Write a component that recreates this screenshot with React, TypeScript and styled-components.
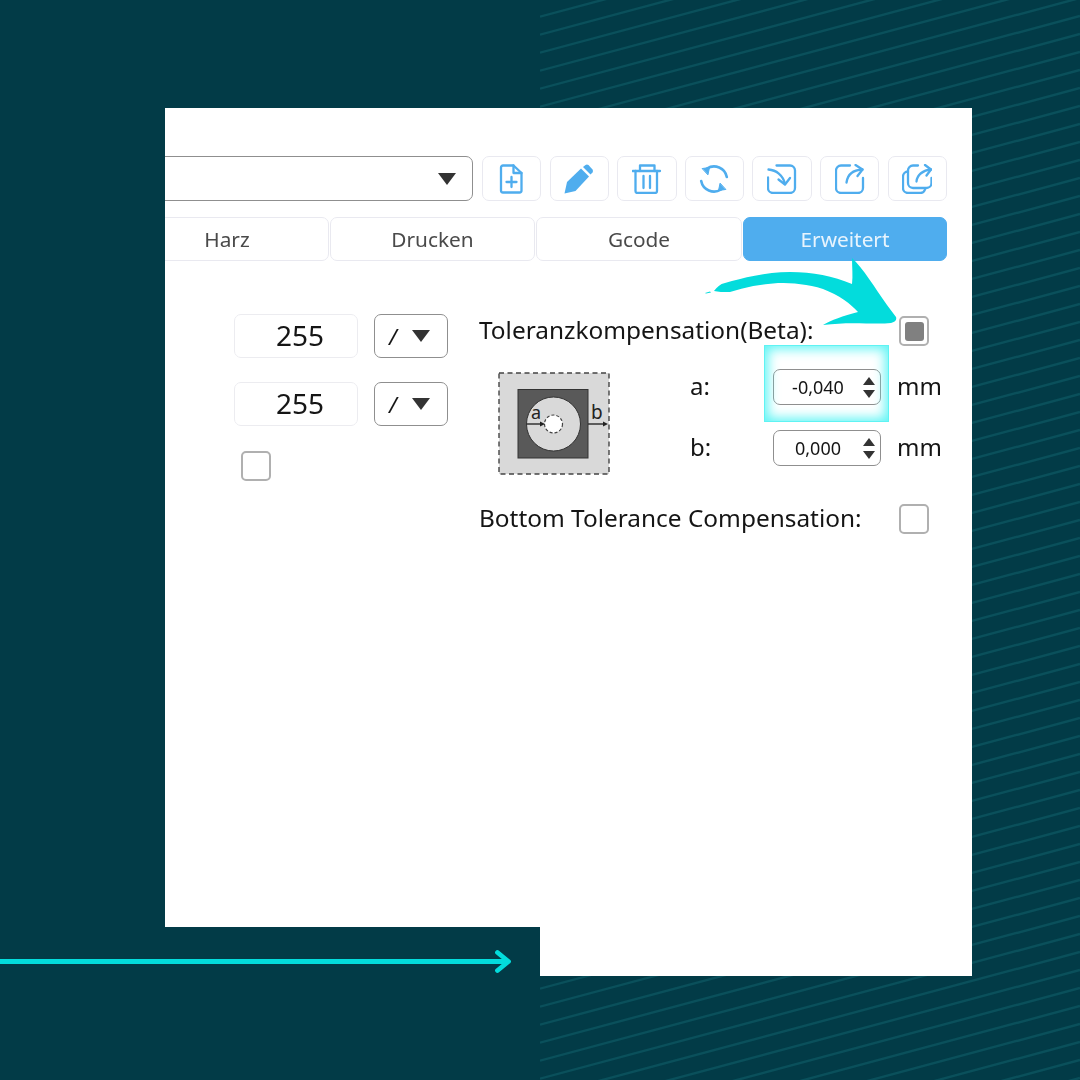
import { ReactNode } from 'react'
import styled, { createGlobalStyle, css } from 'styled-components'

const TEAL = '#03dcdc'
const BLUE = '#4fadee'
const DARK = '#023b47'
const FONT = '"Noto Sans", "Open Sans", sans-serif'

// diagonal lines of the backdrop, 18px apart, rising 15deg to the right
const stripeLines = Array.from({ length: 70 }, (_, k) => {
  const y = 16.7 + 18 * k
  return `<path d="M0 ${y}L540 ${(y - 144.7).toFixed(1)}"/>`
}).join('')
const stripes = encodeURIComponent(
  `<svg xmlns="http://www.w3.org/2000/svg" width="540" height="1080" fill="none" stroke="#0a505b" stroke-width="2.4">${stripeLines}</svg>`
)

const GlobalStyle = createGlobalStyle`
  html, body {
    margin: 0;
    padding: 0;
    background: ${DARK};
  }

  * {
    box-sizing: border-box;
  }
`

// the source is an upscaled screenshot, its contents are a bit soft
const soft = css`
  filter: blur(0.4px);
`

const Page = styled.div`
  width: 1080px;
  height: 1080px;
  padding-top: 108px;
  overflow: hidden;
  font-family: ${FONT};
  color: #151515;
  background: url("data:image/svg+xml,${stripes}") right top / 540px 1080px no-repeat ${DARK};
`

const Sheet = styled.main`
  position: relative;
  width: 807px;
  height: 819px;
  margin-left: 165px;
  padding-top: 48px;
  overflow: hidden;
  background: #fff;
`

const Footer = styled.div`
  display: flex;
  width: 972px;
  height: 49px;
`

const FooterArrow = styled.svg`
  flex: 0 0 540px;
  height: 49px;
`

const FooterFill = styled.div`
  flex: 1;
  background: #fff;
`

const Toolbar = styled.div`
  ${soft};
  display: flex;
  height: 45px;
  margin-left: -40px;
  padding-right: 25px;
`

const Caret = styled.span<{ $size?: number }>`
  display: block;
  flex: none;
  border-left: ${p => (p.$size ?? 9.5)}px solid transparent;
  border-right: ${p => (p.$size ?? 9.5)}px solid transparent;
  border-top: ${p => ((p.$size ?? 9.5) * 1.35).toFixed(1)}px solid #333;
`

const ProfileSelect = styled.div`
  display: flex;
  flex: 1;
  align-items: center;
  justify-content: flex-end;
  margin-right: 9px;
  padding-right: 16px;
  border: 1.5px solid #8f8f8f;
  border-radius: 7px;
`

const ToolButtons = styled.div`
  display: flex;
  gap: 8.1px;
`

const ToolButton = styled.div`
  display: flex;
  align-items: center;
  justify-content: center;
  width: 59.5px;
  height: 45px;
  border: 1.5px solid #e9e9f0;
  border-radius: 7px;

  svg {
    width: 30px;
    height: 30px;
    fill: none;
    stroke: ${BLUE};
    stroke-width: 2.3;
    stroke-linecap: round;
    stroke-linejoin: round;
  }
`

const Tabs = styled.div`
  ${soft};
  display: grid;
  grid-template-columns: 204px 205px 206px 204px;
  gap: 1px;
  height: 44px;
  margin: 16px 0 0 -40px;
`

const Tab = styled.div<{ $active?: boolean }>`
  display: flex;
  align-items: center;
  justify-content: center;
  border: 1.5px solid #e9e9f0;
  border-radius: 7px;
  font-size: 20.8px;
  color: #4a4a4a;

  ${p =>
    p.$active &&
    css`
      border-color: ${BLUE};
      background: ${BLUE};
      color: #e8f4fd;
    `}
`

const Body = styled.div`
  ${soft};
  display: grid;
  grid-template-columns: 314px 493px;
  margin-top: 53px;
`

const LeftColumn = styled.div`
  display: flex;
  flex-direction: column;
  gap: 24px;
  padding-left: 69px;
`

const FieldRow = styled.div`
  display: flex;
  gap: 16px;
  height: 44px;
`

const ValueField = styled.div`
  display: flex;
  align-items: center;
  justify-content: center;
  width: 124px;
  padding: 0 0 2px 8px;
  border: 1.5px solid #ececf0;
  border-radius: 7px;
  font-size: 28px;
  line-height: 1;
`

const UnitSelect = styled.div`
  display: flex;
  align-items: center;
  justify-content: space-between;
  width: 74px;
  padding: 0 17px 0 14px;
  border: 1.5px solid #8f8f8f;
  border-radius: 7px;
  font-size: 22px;
`

const CheckBox = styled.div<{ $checked?: boolean }>`
  display: flex;
  align-items: center;
  justify-content: center;
  flex: none;
  width: 30px;
  height: 30px;
  border: 2.5px solid #b0b0b0;
  border-radius: 5px;
  background: #fff;

  &::before {
    content: '';
    display: ${p => (p.$checked ? 'block' : 'none')};
    width: 19px;
    height: 19px;
    border-radius: 3px;
    background: #808080;
  }
`

const LeftCheck = styled(CheckBox)`
  margin: 1px 0 0 7px;
`

const RightColumn = styled.div`
  display: flex;
  flex-direction: column;
  min-width: 0;
  padding-right: 43px;
`

const OptionRow = styled.div`
  display: flex;
  align-items: center;
  justify-content: space-between;
  height: 30px;
  margin-top: 2px;
  font-size: 24.4px;
  white-space: nowrap;
`

const RaisedText = styled.span`
  margin-top: -3px;
`

const Compensation = styled.div`
  display: flex;
  align-items: flex-start;
  height: 106px;
  margin: 23px 0 27px;
`

const Diagram = styled.svg`
  flex: none;
  width: 112px;
  height: 104px;
  margin: 3px 80px 0 19px;
`

const SpinRows = styled.div`
  display: flex;
  flex: none;
  flex-direction: column;
  gap: 25px;
`

const SpinRow = styled.div`
  display: flex;
  align-items: center;
  height: 36px;
  font-size: 24px;
`

const SpinLabel = styled(RaisedText)`
  width: 83px;
`

const SpinBox = styled.div<{ $highlight?: boolean }>`
  position: relative;
  display: flex;
  align-items: center;
  width: 108px;
  height: 36px;
  margin-right: 16px;
  padding: 0 5px 0 0;
  border: 1.5px solid #8f8f8f;
  border-radius: 7px;
  font-size: 18px;

  ${p =>
    p.$highlight &&
    css`
      &::after {
        content: '';
        position: absolute;
        inset: -25px -9px -18px -10px;
        border: 1px solid #5ff3f3;
        box-shadow: inset 0 0 12px 3px #5ff5f5;
        pointer-events: none;
      }
    `}
`

const SpinValue = styled.span`
  flex: 1;
  padding-right: 1px;
  text-align: center;
`

const SpinArrows = styled.span`
  display: flex;
  flex-direction: column;
  gap: 5px;
`

const SpinUp = styled.span`
  display: block;
  border-left: 6.5px solid transparent;
  border-right: 6.5px solid transparent;
  border-bottom: 8px solid #333;
`

const SpinDown = styled.span`
  display: block;
  border-left: 6.5px solid transparent;
  border-right: 6.5px solid transparent;
  border-top: 8px solid #333;
`

const BrushArrow = styled.svg`
  position: absolute;
  left: 538px;
  top: 150px;
  width: 200px;
  height: 70px;
`

const toolIcons: ReactNode[] = [
  <>
    <path d="M6 1.5h10.500L24.500 9v17.500a2 2 0 0 1-2 2H6a2 2 0 0 1-2-2v-23a2 2 0 0 1 2-2z" />
    <path d="M16.500 1.500V9h8" />
    <path d="M14.500 13v10M9.500 18h10" />
  </>,
  <>
    <path d="M0.500 29.500 L3 18 L17 4.500 L25 12.500 L11.500 27 Z" fill={BLUE} stroke="none" />
    <path
      d="M19 3 L21.500 0.900 Q23 0 24.500 1 L28.500 5.500 Q29.500 7 28.500 8.500 L26.500 10.500 Z"
      fill={BLUE}
      stroke="none"
    />
  </>,
  <>
    <path d="M0.800 7H28" />
    <path d="M8 7V1.500h14.500V7" />
    <path d="M3.500 7v20a2 2 0 0 0 2 2h17.500a2 2 0 0 0 2-2V7" />
    <path d="M11.500 12v12M18 12v12" />
  </>,
  <>
    <path d="M27.800 13A13 13 0 0 0 8 4.500" strokeWidth={2.6} />
    <path d="M2.200 17A13 13 0 0 0 22 25.500" strokeWidth={2.6} />
    <path d="M3.500 4.500L10.500 3.500L9 10.500z" fill={BLUE} strokeWidth={1} />
    <path d="M26.500 25.500L19.500 26.500L21 19.500z" fill={BLUE} strokeWidth={1} />
  </>,
  <>
    <path d="M9.500 1.500H23a5 5 0 0 1 5 5v17.500a5 5 0 0 1-5 5H6a5 5 0 0 1-5-5V13.500" />
    <path d="M1.500 5.500C9 6 16 11 18 20" />
    <path d="M11.500 15.500L18 20.500L23 14" />
  </>,
  <>
    <path d="M15 1.500H6a5 5 0 0 0-5 5v17.500a5 5 0 0 0 5 5h17a5 5 0 0 0 5-5V14" />
    <path d="M11.500 18.500C12.500 11 18 6 27.500 5.500" />
    <path d="M20.500 1L27.500 5.500L22.500 12" />
  </>,
  <>
    <path d="M16 1.500H11a5 5 0 0 0-5 5V19a5 5 0 0 0 5 5h13.500a5 5 0 0 0 5-5V14" />
    <path d="M6 7.500a5 5 0 0 0-5 5V24a5 5 0 0 0 5 5h12.500a5 5 0 0 0 4.500-3.500" />
    <path d="M14.500 17.500C15 11 21 6 29 5.500" />
    <path d="M23 1L29 5.500L24.500 11.500" />
  </>,
]

function SpinField({ label, value, highlight }: { label: string; value: string; highlight?: boolean }) {
  return (
    <SpinRow>
      <SpinLabel>{label}</SpinLabel>
      <SpinBox $highlight={highlight}>
        <SpinValue>{value}</SpinValue>
        <SpinArrows>
          <SpinUp />
          <SpinDown />
        </SpinArrows>
      </SpinBox>
      <RaisedText>mm</RaisedText>
    </SpinRow>
  )
}

function ValueRow() {
  return (
    <FieldRow>
      <ValueField>255</ValueField>
      <UnitSelect>
        <i>/</i>
        <Caret $size={9} />
      </UnitSelect>
    </FieldRow>
  )
}

export default function App() {
  return (
    <Page>
      <GlobalStyle />
      <Sheet>
        <Toolbar>
          <ProfileSelect>
            <Caret />
          </ProfileSelect>
          <ToolButtons>
            {toolIcons.map((icon, index) => (
              <ToolButton key={index}>
                <svg viewBox="0 0 30 30">{icon}</svg>
              </ToolButton>
            ))}
          </ToolButtons>
        </Toolbar>

        <Tabs>
          <Tab>Harz</Tab>
          <Tab>Drucken</Tab>
          <Tab>Gcode</Tab>
          <Tab $active>Erweitert</Tab>
        </Tabs>

        <Body>
          <LeftColumn>
            <ValueRow />
            <ValueRow />
            <LeftCheck />
          </LeftColumn>

          <RightColumn>
            <OptionRow>
              <RaisedText>Toleranzkompensation(Beta):</RaisedText>
              <CheckBox $checked />
            </OptionRow>

            <Compensation>
              <Diagram viewBox="0 0 112 104">
                <rect x="1" y="1" width="110" height="101" fill="#d9d9d9" stroke="#444" strokeWidth="1.4" strokeDasharray="5 3.5" />
                <rect x="20" y="17.500" width="70" height="68.500" fill="#595959" stroke="#333" />
                <circle cx="55.500" cy="52" r="27" fill="#d9d9d9" stroke="#333" />
                <circle cx="55.500" cy="52" r="9" fill="#fff" stroke="#444" strokeWidth="1.2" strokeDasharray="3 2" />
                <path d="M28.500 52H42M90 52h15" stroke="#333" strokeWidth="1.300" fill="none" />
                <path d="M47 52l-5-2.500v5zM110 52l-5-2.500v5z" fill="#222" />
                <text x="33" y="47" fontFamily={FONT} fontSize="18" fill="#222">a</text>
                <text x="93" y="47" fontFamily={FONT} fontSize="19" fill="#222">b</text>
              </Diagram>
              <SpinRows>
                <SpinField label="a:" value="-0,040" highlight />
                <SpinField label="b:" value="0,000" />
              </SpinRows>
            </Compensation>

            <OptionRow>
              <RaisedText>Bottom Tolerance Compensation:</RaisedText>
              <CheckBox />
            </OptionRow>
          </RightColumn>
        </Body>

        <BrushArrow viewBox="0 0 200 70">
          <path
            d="M11 33 C14 29 17 26 22 25 C40 20 62 14 87 14 C110 14 130 18 149 26 C150 18 149 9 149 0 C160 10 172 30 184 47 L193 59 C194 62 192 64 188 65 C170 67 150 63 120 67 C128 62 140 58 155 54 C148 46 136 37 120 31 C105 26 90 25 75 25 C58 26 42 29 27 34 C20 34 15 34 11 33 Z"
            fill={TEAL}
          />
          <path d="M2 35l5-1.500 1 1-5 1z" fill={TEAL} />
        </BrushArrow>
      </Sheet>
      <Footer>
        <FooterArrow viewBox="0 0 540 49">
          <path
            d="M0 34.500H508M497.500 25.500L508.500 34.500L497.500 43.500"
            fill="none"
            stroke={TEAL}
            strokeWidth="4.800"
            strokeLinecap="round"
            strokeLinejoin="round"
          />
        </FooterArrow>
        <FooterFill />
      </Footer>
    </Page>
  )
}
